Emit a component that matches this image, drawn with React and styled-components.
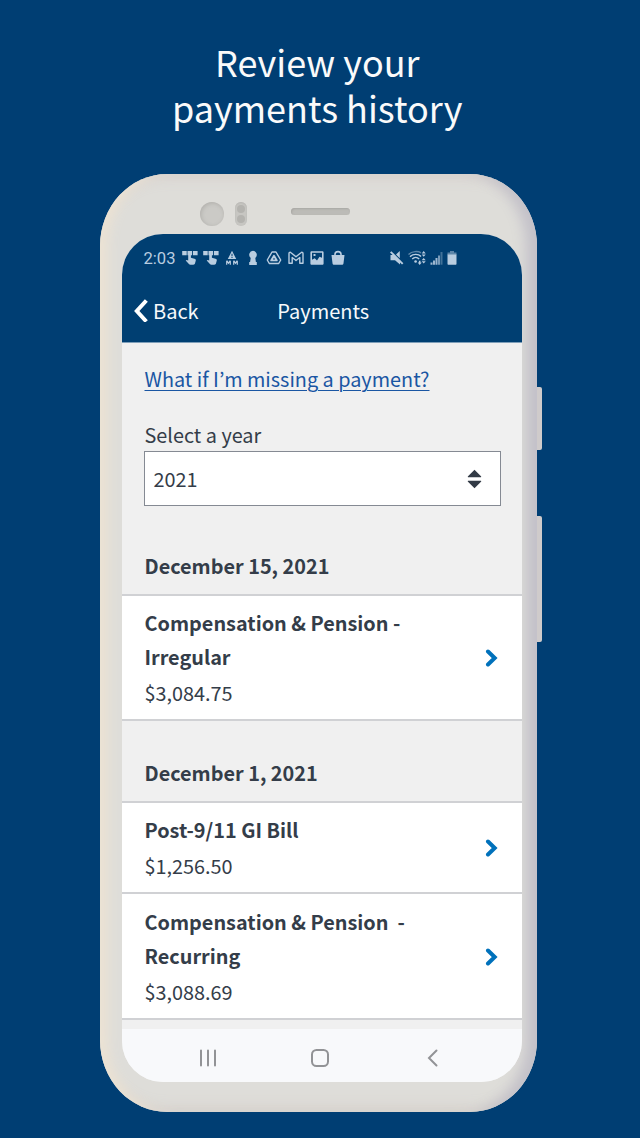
import React from 'react';
import styled, { createGlobalStyle } from 'styled-components';

const GlobalStyle = createGlobalStyle`
  * { box-sizing: border-box; }
  body {
    margin: 0;
    background: #003e73;
    font-family: "Noto Sans CJK KR", "Noto Sans", sans-serif;
  }
`;

const Page = styled.main`
  height: 1138px;
  width: 640px;
  padding-top: 38px;
  background: #003e73;
  overflow: hidden;
`;

const Headline = styled.h1`
  margin: 0 0 44px;
  height: 92px;
  padding-right: 5.5px;
  color: #fafafa;
  font-size: 36px;
  font-weight: 400;
  line-height: 46px;
  text-align: center;
`;

const Phone = styled.div`
  position: relative;
  width: 437px;
  height: 938px;
  margin-left: 100px;
  padding: 0 15px 30px 22px;
  border-radius: 67px / 72px;
  background: #deddd9;
  box-shadow:
    inset 13px 0 12px -5px #ece3d4,
    inset -17px 0 13px -6px #c3c1c9,
    inset 0 12px 14px -8px #d7d1ce,
    inset 0 -12px 14px -8px #d5d0cb;
`;

const SideButton = styled.span`
  position: absolute;
  left: 437px;
  top: ${(p) => p.$top}px;
  width: 4.5px;
  height: ${(p) => p.$height}px;
  border-radius: 0 2px 2px 0;
  background: #cfcbcb;
`;

const Bezel = styled.div`
  display: flex;
  align-items: center;
  height: 60px;
  padding: 19px 0 0 78px;
`;

const Camera = styled.span`
  width: 24px;
  height: 24px;
  border-radius: 50%;
  background: #cbcac6;
  box-shadow: inset 1px 1px 4px #b0afab;
`;

const Sensor = styled.span`
  display: flex;
  flex-direction: column;
  align-items: center;
  justify-content: space-between;
  width: 12px;
  height: 24px;
  margin-left: 11px;
  padding: 3px 0;
  border-radius: 6px;
  background: #c7c6c2;
  box-shadow: inset 0 1px 2px #b8b7b3;
`;

const SensorDot = styled.i`
  width: 8px;
  height: 8px;
  border-radius: 50%;
  background: #b4b3af;
`;

const Speaker = styled.span`
  width: 59px;
  height: 7px;
  margin: 0 0 4px 44px;
  border-radius: 4px;
  background: #bcbbb7;
  box-shadow: inset 1px 1px 2px #a9a8a4;
`;

const Screen = styled.div`
  display: flex;
  flex-direction: column;
  width: 400px;
  height: 848px;
  border-radius: 41px;
  overflow: hidden;
  background: #f0f0f0;
  color: #343d49;
  font-size: 19.85px;
`;

const StatusBar = styled.div`
  display: flex;
  align-items: center;
  height: 48px;
  padding-left: 21.5px;
  background: #003f72;
  color: #b9cde0;
`;

const Clock = styled.span`
  width: 38.2px;
  padding-top: 1px;
  font: 400 16.6px/20px Roboto, sans-serif;
`;

const Notifications = styled.div`
  display: flex;
  gap: 5.2px;
`;

const Signals = styled.div`
  display: flex;
  align-items: center;
  gap: 4px;
  margin-left: 43px;
`;

const Glyph = styled.svg`
  display: block;
  width: ${(p) => p.$width || 16}px;
  height: 16px;
  fill: currentColor;
`;

const AppBar = styled.header`
  display: grid;
  grid-template-columns: 1fr auto 1fr;
  align-items: center;
  height: 61px;
  padding: 0 8.5px 3px 11px;
  border-bottom: 1px solid #7f9fb9;
  background: #003f72;
  color: #f7fafc;
  font-size: 20px;
`;

const BackLink = styled.a`
  display: flex;
  align-items: center;
  gap: 5px;
  line-height: 30px;
`;

const BackChevron = styled.svg`
  width: 15px;
  height: 23px;
`;

const Title = styled.h2`
  margin: 0;
  font-size: 20px;
  font-weight: 400;
  line-height: 30px;
`;

const Content = styled.div`
  flex: 1;
  min-height: 0;
  overflow: hidden;
`;

const Filters = styled.section`
  padding: 21px 21px 0 22px;
`;

const HelpLink = styled.a`
  display: block;
  color: #1a56a3;
  line-height: 30px;
  padding-left: 0.5px;
  text-decoration: underline;
  text-decoration-thickness: 1px;
  text-underline-offset: 3px;
`;

const Label = styled.label`
  display: block;
  margin: 26px 0 1px;
  padding-left: 0.5px;
  line-height: 30px;
`;

const Select = styled.div`
  display: flex;
  align-items: center;
  justify-content: space-between;
  height: 55px;
  padding: 1px 18.5px 0 8.5px;
  border: 1.5px solid #858a93;
  background: #fff;
  line-height: 30px;
`;

const Sorter = styled.svg`
  width: 15px;
  height: 20px;
  margin-bottom: 1px;
  fill: #323a45;
`;

const DateHeading = styled.h3`
  height: ${(p) => p.$height}px;
  margin: 0;
  padding: ${(p) => p.$top}px 0 0 22.5px;
  font-size: inherit;
  font-weight: 700;
  line-height: 30px;
`;

const PaymentList = styled.div`
  border-bottom: 2px solid #d0d1d4;
`;

const PaymentRow = styled.article`
  display: flex;
  align-items: center;
  justify-content: space-between;
  height: ${(p) => p.$height}px;
  padding: ${(p) => p.$inset || 0}px 24px 0 22.5px;
  border-top: 2px solid #d0d1d4;
  background: #fff;
`;

const PaymentName = styled.strong`
  display: block;
  font-weight: 700;
  line-height: 34px;
  white-space: pre-line;
`;

const Amount = styled.span`
  display: block;
  margin-top: 2px;
  line-height: 34px;
`;

const RowChevron = styled.svg`
  width: 13px;
  height: 18px;
`;

const NavBar = styled.nav`
  display: flex;
  justify-content: space-between;
  height: 53px;
  padding: 18.5px 80px 0 76px;
  background: #f8f9fb;
`;

const NavIcon = styled.svg`
  width: 20px;
  height: 20px;
  fill: none;
  stroke: #929396;
  stroke-width: 2;
  stroke-linecap: round;
`;

const groups = [
  {
    date: 'December 15, 2021', height: 88, top: 45,
    rows: [{ name: 'Compensation & Pension -\nIrregular', amount: '$3,084.75', height: 125 }],
  },
  {
    date: 'December 1, 2021', height: 80, top: 37,
    rows: [
      { name: 'Post-9/11 GI Bill', amount: '$1,256.50', height: 91 },
      { name: 'Compensation & Pension \u00a0-\nRecurring', amount: '$3,088.69', height: 126, inset: 2 },
    ],
  },
];

function TapGlyph() {
  return (
    <Glyph viewBox="0 0 16 16">
      <path d="M.2 1h4.500v4.300H.2zM5.500 1H10v4.300H5.500zM10.900 1h4.700v4.300h-4.700z" />
      <path d="M6.200 4.600h2.700v3.200l3.500.9c1 .2 1.500.9 1.400 1.700l-.7 2.700c-.2 1-.8 1.600-1.800 1.600H8.400c-.7 0-1.100-.2-1.500-.7L3.700 10.600c.6-.9 1.500-.9 2.500 0z" />
    </Glyph>
  );
}

function StatusIcons() {
  return (
    <>
      <Notifications>
        <TapGlyph />
        <TapGlyph />
        <Glyph viewBox="0 0 16 16">
          <path fillRule="evenodd" d="M8 .8 12.200 9H3.800zM7.500 3.800v2.400h1V3.800zm0 3.200v1h1V7z" />
          <path d="M2.700 14.700v-4M2.700 10.700l1.800 2.500 1.800-2.500M6.300 10.700v4M9.700 14.700v-4M9.700 10.700l1.800 2.500 1.800-2.500M13.300 10.700v4" fill="none" stroke="currentColor" strokeWidth="1.200" />
        </Glyph>
        <Glyph viewBox="0 0 16 16">
          <path d="M8 .8a4 4 0 0 1 2.300 7.100l.6 4.100h.9v3H4.200v-3h.9l.6-4.100A4 4 0 0 1 8 .8z" />
        </Glyph>
        <Glyph viewBox="0 0 16 16">
          <g fill="none" stroke="currentColor" strokeWidth="1.400" strokeLinejoin="round">
            <path d="M6 2h4l4.700 8-2 3.500H3.300L1.300 10z" />
            <path d="M8 5.700 10.800 10.400H5.200z" strokeWidth="1.900" />
          </g>
        </Glyph>
        <Glyph viewBox="0 0 16 16">
          <path d="M1 13.300V3.400C1 2.300 2.200 2 3 2.700l5 4 5-4c.8-.7 2-.4 2 .7v9.900h-3.200V7.500L8 10.500l-3.800-3v5.800z" fill="none" stroke="currentColor" strokeWidth="1.400" strokeLinejoin="round" />
        </Glyph>
        <Glyph viewBox="0 0 16 16">
          <path fillRule="evenodd" d="M2.700 1.200h10.600c.8 0 1.300.5 1.300 1.300v11c0 .8-.5 1.300-1.300 1.300H2.700c-.8 0-1.300-.5-1.300-1.300v-11c0-.8.5-1.300 1.300-1.300zM3 2.800v7l2.700-1.600 2.300 2.300 2.500-3.800L13 7.800v-5zM4.500 4h2v2h-2z" />
        </Glyph>
        <Glyph viewBox="0 0 16 16">
          <path d="M1.500 5h13l-1 8.200c-.1 1-.8 1.600-1.700 1.600H4.200c-.9 0-1.600-.6-1.700-1.600z" />
          <path d="M5 6V4.300C5 .7 11 .7 11 4.300V6" fill="none" stroke="currentColor" strokeWidth="1.600" />
        </Glyph>
      </Notifications>
      <Signals>
        <Glyph $width={15} viewBox="0 0 15 16">
          <path d="M1.500 5H5l6 6.200V14.500l-5-4.200H1.500zM7 4.500 10.800 1v7.300z" />
          <path d="m1.700 1.800 12 12" stroke="currentColor" strokeWidth="1.900" />
        </Glyph>
        <Glyph $width={18} viewBox="0 0 18 16">
          <g fill="none" stroke="currentColor" strokeWidth="1.400">
            <path d="M.5 4.500C4 1 10 .8 13 2.800" opacity=".5" />
            <path d="M2 6.700C5 3.700 10.500 3.700 13 6.500M4.200 9c2-2 5-2 7 0" />
          </g>
          <circle cx="7.600" cy="11.500" r="1.300" />
          <path d="m15.700 1 2 2.500h-4zM15.700 6.700l-2-2.200h4zM15.700 8l2 2.300h-4zM15.700 13.500l-2-2.200h4zM11.700 15l-2-2.400h1.200V10.800h1.600v1.800h1.200z" />
        </Glyph>
        <Glyph $width={13} viewBox="0 0 13 16">
          <path d="M.5 12.500h2v2.200h-2zM3 10.500h2v4.200H3zM5.500 8h2v6.700h-2z" opacity=".85" />
          <path d="M8 5.500h2v9.200H8z" opacity=".65" />
          <path d="M10.500 2h2v12.700h-2z" opacity=".35" />
        </Glyph>
        <Glyph $width={10} viewBox="0 0 10 16">
          <path d="M3 1h4v1.500h2.500V5h-9V2.500H3z" opacity=".5" />
          <path d="M.5 4.500h9v9.200c0 .6-.4 1-1 1h-7c-.6 0-1-.4-1-1z" />
        </Glyph>
      </Signals>
    </>
  );
}

export default function App() {
  return (
    <Page>
      <GlobalStyle />
      <Headline>Review your<br />payments history</Headline>
      <Phone>
        <SideButton $top={213} $height={63} />
        <SideButton $top={342} $height={126} />
        <Bezel>
          <Camera />
          <Sensor><SensorDot /><SensorDot /></Sensor>
          <Speaker />
        </Bezel>
        <Screen>
          <StatusBar>
            <Clock>2:03</Clock>
            <StatusIcons />
          </StatusBar>
          <AppBar>
            <BackLink>
              <BackChevron viewBox="0 0 15 23">
                <path d="M12 3 3.800 12l8.200 9" fill="none" stroke="#fff" strokeWidth="4" strokeLinecap="square" />
              </BackChevron>
              Back
            </BackLink>
            <Title>Payments</Title>
          </AppBar>
          <Content>
            <Filters>
              <HelpLink>What if I’m missing a payment?</HelpLink>
              <Label>Select a year</Label>
              <Select>
                2021
                <Sorter viewBox="0 0 15 20">
                  <path d="M7.500.7 14 7.200c.5.600.2 1.100-.5 1.100h-12c-.7 0-1-.5-.5-1.100zM7.500 19.300 1 12.800c-.5-.6-.2-1.100.5-1.100h12c.7 0 1 .5.5 1.100z" />
                </Sorter>
              </Select>
            </Filters>
            {groups.map((group) => (
              <section key={group.date}>
                <DateHeading $height={group.height} $top={group.top}>{group.date}</DateHeading>
                <PaymentList>
                  {group.rows.map((row) => (
                    <PaymentRow key={row.amount} $height={row.height} $inset={row.inset}>
                      <div>
                        <PaymentName>{row.name}</PaymentName>
                        <Amount>{row.amount}</Amount>
                      </div>
                      <RowChevron viewBox="0 0 13 18">
                        <path d="m3 2.500 6.700 6.500L3 15.500" fill="none" stroke="#0071bb" strokeWidth="4" strokeLinecap="round" />
                      </RowChevron>
                    </PaymentRow>
                  ))}
                </PaymentList>
              </section>
            ))}
          </Content>
          <NavBar>
            <NavIcon viewBox="0 0 20 20"><path d="M3 2.500v15M10 2.500v15M17 2.500v15" /></NavIcon>
            <NavIcon viewBox="0 0 20 20"><rect x="2" y="2" width="16" height="16" rx="4.500" /></NavIcon>
            <NavIcon viewBox="0 0 20 20"><path d="M14.500 2.500 7 10l7.500 7.500" /></NavIcon>
          </NavBar>
        </Screen>
      </Phone>
    </Page>
  );
}
